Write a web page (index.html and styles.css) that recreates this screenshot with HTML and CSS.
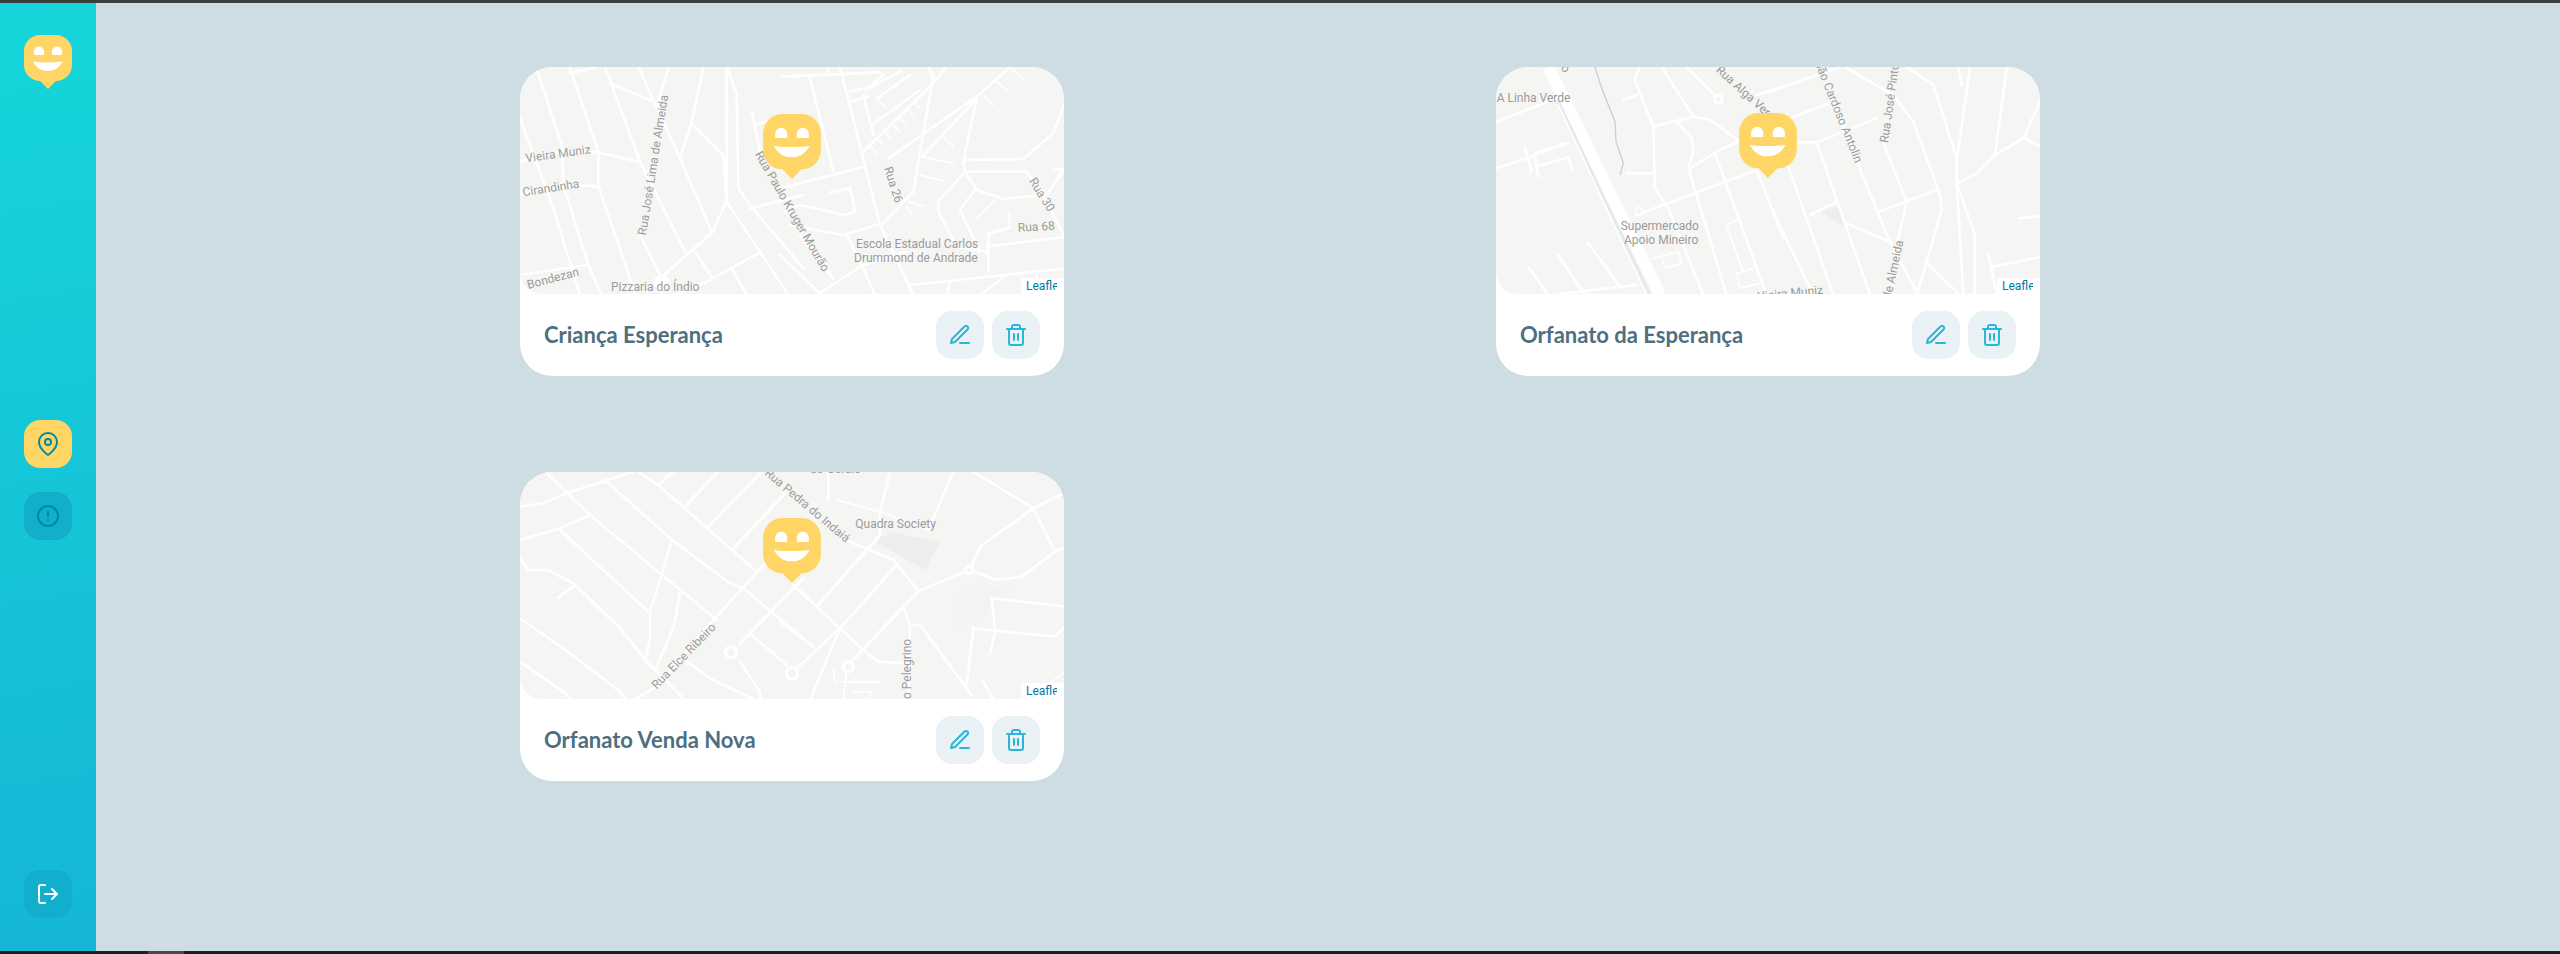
FILE: index.html
```html
<!DOCTYPE html>
<html lang="en">

<head>
    <meta charset="UTF-8">
    <meta name="viewport" content="width=device-width, initial-scale=1.0">
    <link rel="stylesheet" href="styles.css">
    <title>Dashboard</title>
</head>

<body>
    <svg class="icon-defs" aria-hidden="true">
        <symbol id="happy-mark" viewBox="0 0 48 54">
            <path class="mark-body" d="M16 0H32A16 16 0 0 1 48 16V30A16 16 0 0 1 32 46L24 54L16 46A16 16 0 0 1 0 30V16A16 16 0 0 1 16 0Z" />
            <path class="mark-face" d="M10 20V16.500a5 5 0 0 1 10 0V20ZM28 20V16.500a5 5 0 0 1 10 0V20ZM8.700 26.500Q24 28.500 38.700 26.500Q33.500 36 23.700 36Q14 36 8.700 26.500Z" />
        </symbol>
        <symbol id="icon-edit" viewBox="0 0 24 24">
            <path d="M12 20h9" />
            <path d="M16.500 3.500a2.121 2.121 0 0 1 3 3L7 19l-4 1 1-4L16.500 3.500z" />
        </symbol>
        <symbol id="icon-trash" viewBox="0 0 24 24">
            <path d="M3 6h18" />
            <path d="M19 6v14a2 2 0 0 1-2 2H7a2 2 0 0 1-2-2V6m3 0V4a2 2 0 0 1 2-2h4a2 2 0 0 1 2 2v2" />
            <path d="M10 11v6M14 11v6" />
        </symbol>
    </svg>

    <div class="window-top"></div>

    <div class="app">
        <aside class="sidebar">
            <svg class="logo"><use href="#happy-mark" /></svg>

            <nav class="side-nav">
                <a class="side-button side-button-active" href="#">
                    <svg class="icon icon-teal" viewBox="0 0 24 24">
                        <path d="M21 10c0 7-9 13-9 13s-9-6-9-13a9 9 0 0 1 18 0z" />
                        <circle cx="12" cy="10" r="3" />
                    </svg>
                </a>
                <a class="side-button" href="#">
                    <svg class="icon icon-teal" viewBox="0 0 24 24">
                        <circle cx="12" cy="12" r="10" />
                        <path d="M12 8v4M12 16h.01" />
                    </svg>
                </a>
            </nav>

            <a class="side-button side-button-soft" href="#">
                <svg class="icon icon-white" viewBox="0 0 24 24">
                    <path d="M9 21H5a2 2 0 0 1-2-2V5a2 2 0 0 1 2-2h4" />
                    <path d="M16 17l5-5-5-5" />
                    <path d="M21 12H9" />
                </svg>
            </a>
        </aside>

        <main class="content">
            <!-- card 1 -->
            <article class="card">
                <div class="map">
                    <svg class="tiles" viewBox="0 0 1632 681">
                        <g transform="translate(-30 -36)">
                            <path class="road" d="M78 36L155 270L160 390L235 630L275 720M180 40L265 290L265 395L340 610L375 720M285 36L390 320L530 600M385 36L510 310L605 530M300 85L430 140M180 55L260 36M30 190L130 460L210 720M30 320L150 290L265 292L385 320M30 420L155 385L265 395M475 36L440 160M580 36L545 200L510 310M545 205L640 300L650 440L605 535L455 665M650 36L680 115L685 400L720 450L880 640M650 36L650 440L750 590L835 720M390 540L450 660L455 720M555 590L605 665M745 595L590 680L500 720M665 640L710 720M725 170L750 290M735 210L770 200M720 460L880 420M815 65L880 60M30 660L230 630" />
                            <circle class="road-fill" cx="455" cy="682" r="24" />
                        </g>
                        <g transform="translate(780 -36)">
                            <path class="road" d="M5 65L300 52M88 60L160 350M180 36L300 510L400 720M145 36V50M0 400L255 335M210 110L265 98L310 60M210 140L265 125M250 120L280 240M265 100L360 50M290 130L390 60M275 210L420 105M250 290L460 85L500 36M325 310L590 125L690 36M460 60L400 410L300 515M445 36L460 65M430 300L590 130L550 320L555 350L590 405L670 432L790 420M555 315L730 312L820 235L860 130M555 350L740 350L790 420L860 560M555 350L475 440L475 470L530 575L620 590M585 405L540 465L600 590M685 520L625 535L625 650M620 575L860 545M390 690L860 640M150 412L210 400L225 470L195 480L60 450L15 470M30 510L190 540L290 510M200 540L250 640L285 720M110 720L250 630L380 590M160 670L60 540M0 600L125 720M510 680L500 720M770 650V720M600 720L680 660M800 420L860 330M820 345L860 340" />
                            <path class="road road-thin" d="M610 120L640 150M650 80L685 110M695 40L730 75M490 245L520 275M425 305L520 325M415 358L490 378M385 440L435 455M380 455L400 485M645 435L590 490M685 470L690 520M290 130L320 160M340 210L360 232M315 232L335 250M290 250L310 270M272 275L292 295M355 185L375 205M380 160L400 180M405 145L418 158" />
                            <text class="map-label" transform="translate(312 340) rotate(72)">Rua 26</text>
                            <text class="map-label" transform="translate(746 378) rotate(58)">Rua 30</text>
                            <text class="map-label" transform="translate(714 530) rotate(-3)">Rua 68</text>
                            <text class="map-label" x="228" y="580">Escola Estadual Carlos</text>
                            <text class="map-label" x="222" y="622">Drummond de Andrade</text>
                        </g>
                        <g transform="translate(-30 -36)">
                            <text class="map-label" transform="translate(48 322) rotate(-8)">Vieira Muniz</text>
                            <text class="map-label" transform="translate(40 424) rotate(-9)">Cirandinha</text>
                            <text class="map-label" transform="translate(408 542) rotate(-81)">Rua José Lima de Almeida</text>
                            <text class="map-label" transform="translate(734 298) rotate(60)">Rua Paulo Kruger Mourão</text>
                            <text class="map-label" transform="translate(55 702) rotate(-15)">Bondezan</text>
                            <text class="map-label" x="303" y="708">Pizzaria do Índio</text>
                        </g>
                    </svg>
                    <svg class="marker"><use href="#happy-mark" /></svg>
                    <div class="attribution"><span>Leaflet</span></div>
                </div>
                <footer class="card-footer">
                    <h2 class="card-title">Criança Esperança</h2>
                    <div class="card-actions">
                        <button class="action"><svg class="icon icon-blue"><use href="#icon-edit" /></svg></button>
                        <button class="action"><svg class="icon icon-blue"><use href="#icon-trash" /></svg></button>
                    </div>
                </footer>
            </article>

            <!-- card 2 -->
            <article class="card">
                <div class="map">
                    <svg class="tiles" viewBox="0 0 1632 681">
                        <g transform="translate(-18 -36)">
                            <path class="road road-wide" d="M175 36L510 720" />
                            <path class="road-edge" d="M205 140L480 720" />
                            <path class="road road-thin" d="M205 150L470 720" />
                            <path class="river" d="M315 36L335 100L375 200L378 260L400 325L390 360" />
                            <path class="road" d="M18 200L200 130M18 340L110 310L225 265M105 280L125 350M135 300L145 365M235 310L248 345M135 295L235 265M140 335L240 305M400 135L440 120M450 36Q430 70 440 90L490 215L495 400L535 460L640 720M410 355L495 355M515 36L610 185M590 36L685 130M490 215L610 185L660 195L750 260M560 200L605 250L610 290L595 340L710 720M600 340L680 290L750 258M675 295L830 720M440 480L800 345L880 550M295 565L390 695M205 600L285 720M118 640L175 720M210 716L440 690M800 120L880 95" />
                            <path class="road road-thin" d="M490 610L565 590L575 625L525 640L515 605M708 510L750 490M708 510L760 650M740 655L790 640M740 655L750 700L810 685" />
                            <circle class="road-ring" cx="685" cy="132" r="12" />
                            <circle class="road-ring road-thin-ring" cx="447" cy="468" r="10" />
                        </g>
                        <g transform="translate(822 -36)">
                            <path class="patch" d="M155 470L200 455L230 505L218 512Z" />
                            <path class="road" d="M0 110L210 36M60 190L190 140M80 262H140L320 190M140 262L300 720M55 335L190 720M0 450L130 720M120 480L200 440M230 505L360 560M260 320L360 560L445 720M165 90L265 320M225 36L370 120L430 200L510 420L515 465L440 720M340 265L410 440L380 570M325 470L500 405M410 36L490 90L560 310V385L615 540V720M600 36L560 320M710 36L675 300M565 385L620 355L675 300L760 250L815 130M760 250L815 275M560 385L580 720M470 625L570 720M655 595L680 720M670 635L815 605M748 490L815 483M565 36L575 90" />
                            <text class="map-label" text-anchor="end" transform="translate(256 326) rotate(68)">João Cardoso Antolin</text>
                            <text class="map-label" transform="translate(354 265) rotate(-82)">Rua José Pinto</text>
                            <text class="map-label" text-anchor="end" transform="translate(400 558) rotate(-78)">Rua José Lima de Almeida</text>
                            <text class="map-label" text-anchor="end" transform="translate(160 716) rotate(-6)">Vieira Muniz</text>
                        </g>
                        <g transform="translate(-18 -36)">
                            <text class="map-label" x="20" y="140">A Linha Verde</text>
                            <text class="map-label" transform="translate(207 30) rotate(60)">io</text>
                            <text class="map-label" x="392" y="524">Supermercado</text>
                            <text class="map-label" x="402" y="566">Apoio Mineiro</text>
                            <text class="map-label" transform="translate(676 48) rotate(42)">Rua Alga Vera</text>
                        </g>
                    </svg>
                    <svg class="marker marker-high"><use href="#happy-mark" /></svg>
                    <div class="attribution"><span>Leaflet</span></div>
                </div>
                <footer class="card-footer">
                    <h2 class="card-title">Orfanato da Esperança</h2>
                    <div class="card-actions">
                        <button class="action"><svg class="icon icon-blue"><use href="#icon-edit" /></svg></button>
                        <button class="action"><svg class="icon icon-blue"><use href="#icon-trash" /></svg></button>
                    </div>
                </footer>
            </article>

            <!-- card 3 -->
            <article class="card">
                <div class="map">
                    <svg class="tiles" viewBox="0 0 1632 681">
                        <g transform="translate(-30 -21)">
                            <path class="road" d="M105 20L240 150L450 325L620 465M30 125L100 115L170 85L370 20M30 225L150 190L240 150M150 195L420 445M285 45L480 220L660 355L700 370L880 520M385 20L450 65L740 320M445 60L490 20M525 125L625 20M595 185L755 20M670 250L825 85M485 225L455 330L420 440V520L405 590M510 385L490 490L435 615M30 280L55 315H115L190 355L330 490L410 590L525 705M190 365L145 398M30 460L160 550L330 680L350 705M30 590L160 680L185 705M370 705L440 665L610 465L880 170M690 535L880 340M690 590L750 680V705M725 510L830 600M530 590L600 640L735 705" />
                            <circle class="road-ring" cx="663" cy="562" r="17" />
                            <circle class="road-ring" cx="846" cy="625" r="17" />
                        </g>
                        <g transform="translate(780 -21)">
                            <path class="patch" d="M330 200L480 232L435 315L320 250ZM300 215L338 205L320 250L295 235Z" />
                            <path class="patch-faint" d="M520 400L600 350L690 380L600 460L520 490Z" />
                            <path class="road" d="M145 20V105M330 20L300 140V210L260 255L110 425M520 20L445 195M580 20L760 130L860 80M760 130L825 260L860 245M760 130L600 245L570 315M185 220L340 285L415 378M350 300L180 490L50 610M570 315L415 378L205 600M570 315L650 345L725 335L825 260M40 360L250 555L295 590L385 595M0 470L100 545M370 425L390 480H420L575 690M390 480L385 705M635 400L860 425M635 400L645 500L630 565M580 490L825 515L860 480M580 490L560 660M180 490L90 705M610 650L640 705" />
                            <path class="road road-thin" d="M170 105L300 140L445 195M160 615L165 650H300M220 680H275L265 705M200 620L190 705M855 620L790 670" />
                            <circle class="road-ring" cx="568" cy="315" r="11" />
                            <circle class="road-ring" cx="205" cy="605" r="15" />
                            <circle class="road-ring" cx="36" cy="625" r="17" />
                            <text class="map-label" x="90" y="24">do Gerais</text>
                            <text class="map-label" x="226" y="190">Quadra Society</text>
                            <text class="map-label" transform="translate(394 702) rotate(-90)">o Pelegrino</text>
                        </g>
                        <g transform="translate(-30 -21)">
                            <text class="map-label" transform="translate(440 674) rotate(-46)">Rua Elce Ribeiro</text>
                            <text class="map-label" transform="translate(762 28) rotate(40)">Rua Pedra do Indaiá</text>
                        </g>
                    </svg>
                    <svg class="marker marker-high"><use href="#happy-mark" /></svg>
                    <div class="attribution"><span>Leaflet</span></div>
                </div>
                <footer class="card-footer">
                    <h2 class="card-title">Orfanato Venda Nova</h2>
                    <div class="card-actions">
                        <button class="action"><svg class="icon icon-blue"><use href="#icon-edit" /></svg></button>
                        <button class="action"><svg class="icon icon-blue"><use href="#icon-trash" /></svg></button>
                    </div>
                </footer>
            </article>
        </main>
    </div>

    <div class="window-bottom"><span></span></div>
</body>

</html>
```
FILE: styles.css
```css
* {
    box-sizing: border-box;
}

body {
    display: flex;
    flex-direction: column;
    height: 100vh;
    margin: 0;
    overflow: hidden;
    background-color: #cddde3;
    font-family: Lato, "Open Sans", sans-serif;
}

.icon-defs {
    display: none;
}

.window-top {
    flex: 0 0 3px;
    background-color: #3a3e41;
}

.window-bottom {
    flex: 0 0 3px;
    background-color: #1d2023;
}

.window-bottom span {
    display: block;
    width: 36px;
    height: 100%;
    margin-left: 148px;
    background-color: #47494b;
}

.app {
    display: flex;
    flex: 1;
    min-height: 0;
}

/* sidebar */
.sidebar {
    display: flex;
    flex: 0 0 96px;
    flex-direction: column;
    align-items: center;
    justify-content: space-between;
    padding: 32px 0 33px;
    background: linear-gradient(170deg, #15d6da 0%, #15b6d6 100%);
}

.logo {
    width: 48px;
    height: 54px;
}

.mark-body {
    fill: #ffd666;
}

.mark-face {
    fill: #fff;
}

.side-nav {
    display: flex;
    flex-direction: column;
    gap: 24px;
}

.side-button {
    display: flex;
    align-items: center;
    justify-content: center;
    width: 48px;
    height: 48px;
    border-radius: 16px;
    background-color: #12afcb;
}

.side-button-active {
    background-color: #ffd666;
}

.side-button-soft {
    background-color: #12afcd;
}

.icon {
    width: 24px;
    height: 24px;
    fill: none;
    stroke-width: 2;
    stroke-linecap: round;
    stroke-linejoin: round;
}

.icon-teal {
    stroke: #0089a5;
}

.icon-white {
    stroke: #fff;
}

.icon-blue {
    stroke: #29b6d8;
}

/* cards */
.content {
    display: grid;
    flex: 1;
    grid-template-columns: repeat(2, 544px);
    grid-auto-rows: 309px;
    gap: 96px 432px;
    align-content: start;
    justify-content: center;
    padding: 64px 96px 0 0;
}

.card {
    display: flex;
    flex-direction: column;
    overflow: hidden;
    border-radius: 32px;
    background-color: #fff;
}

.map {
    position: relative;
    flex: 0 0 227px;
    overflow: hidden;
    border-radius: 32px 32px 22px 22px;
    background-color: #f5f5f3;
}

.tiles {
    display: block;
    width: 544px;
    height: 227px;
}

.road {
    fill: none;
    stroke: #fff;
    stroke-width: 8;
    stroke-linecap: round;
    stroke-linejoin: round;
}

.road-thin {
    stroke-width: 5;
}

.road-wide {
    stroke-width: 36;
    stroke-linecap: butt;
}

.road-edge {
    fill: none;
    stroke: #e6eaea;
    stroke-width: 10;
}

.road-fill {
    fill: #fff;
}

.road-ring {
    fill: #f5f5f3;
    stroke: #fff;
    stroke-width: 9;
}

.road-thin-ring {
    stroke-width: 5;
}

.river {
    fill: none;
    stroke: #c6d0d5;
    stroke-width: 4;
}

.patch {
    fill: #eceeee;
}

.patch-faint {
    fill: #f3f3f1;
}

.map-label {
    fill: #9b9b9b;
    font-family: Roboto, sans-serif;
    font-size: 36px;
}

.marker {
    position: absolute;
    top: 47px;
    left: 243px;
    width: 58px;
    height: 65px;
}

.marker-high {
    top: 46px;
}

.attribution {
    position: absolute;
    right: 0;
    bottom: 0;
    width: 43px;
    height: 16px;
    padding-left: 5px;
    background-color: #fff;
    color: #0078a8;
    font-family: Roboto, sans-serif;
    font-size: 12px;
    line-height: 16px;
}

.attribution span {
    display: block;
    width: 31px;
    overflow: hidden;
    white-space: nowrap;
}

.card-footer {
    display: flex;
    flex: 1;
    align-items: center;
    justify-content: space-between;
    padding: 0 24px;
}

.card-title {
    margin: 0 0 2px;
    color: #4d6f80;
    font-size: 22px;
    font-weight: 700;
}

.card-actions {
    display: flex;
    gap: 8px;
}

.action {
    display: flex;
    align-items: center;
    justify-content: center;
    width: 48px;
    height: 48px;
    padding: 0;
    border: 0;
    border-radius: 16px;
    background-color: #ebf2f5;
    cursor: pointer;
}
```
